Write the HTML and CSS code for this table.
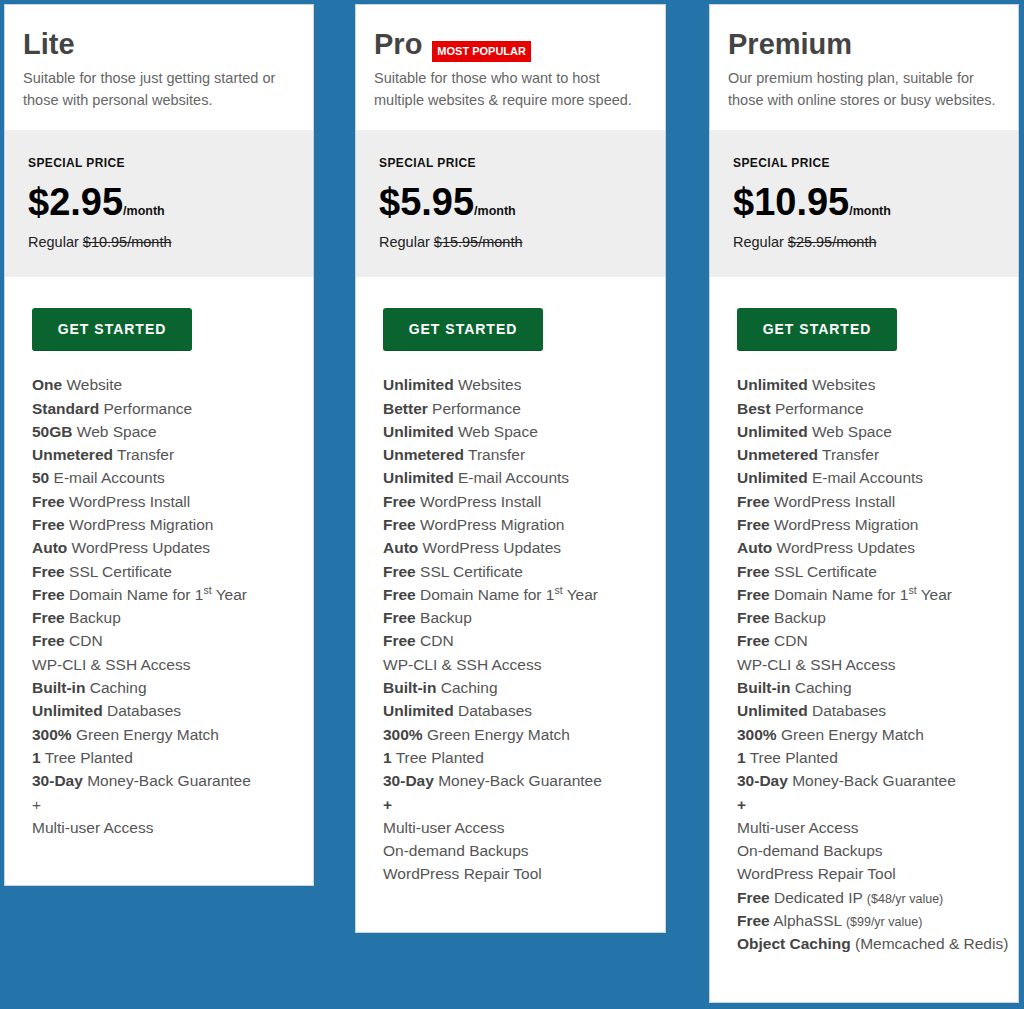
FILE: index.html
```html
<!DOCTYPE html>
<html lang="en">
<head>
<meta charset="utf-8">
<title>Hosting Plans</title>
<link rel="stylesheet" href="styles.css">
</head>
<body>
<div class="plans">
  <div class="card">
    <div class="head">
      <div class="name-row"><h2 class="name">Lite</h2></div>
      <p class="desc">Suitable for those just getting started or those with personal websites.</p>
    </div>
    <div class="price-box">
      <div class="label">SPECIAL PRICE</div>
      <div class="price"><span class="amount">$2.95</span><span class="per">/month</span></div>
      <div class="regular">Regular <s>$10.95/month</s></div>
    </div>
    <div class="body">
      <a class="btn" href="#">GET STARTED</a>
      <ul class="features">
        <li><b>One</b> Website</li>
        <li><b>Standard</b> Performance</li>
        <li><b>50GB</b> Web Space</li>
        <li><b>Unmetered</b> Transfer</li>
        <li><b>50</b> E-mail Accounts</li>
        <li><b>Free</b> WordPress Install</li>
        <li><b>Free</b> WordPress Migration</li>
        <li><b>Auto</b> WordPress Updates</li>
        <li><b>Free</b> SSL Certificate</li>
        <li><b>Free</b> Domain Name for 1<sup>st</sup> Year</li>
        <li><b>Free</b> Backup</li>
        <li><b>Free</b> CDN</li>
        <li>WP-CLI &amp; SSH Access</li>
        <li><b>Built-in</b> Caching</li>
        <li><b>Unlimited</b> Databases</li>
        <li><b>300%</b> Green Energy Match</li>
        <li><b>1</b> Tree Planted</li>
        <li><b>30-Day</b> Money-Back Guarantee</li>
        <li>+</li>
        <li>Multi-user Access</li>
      </ul>
    </div>
  </div>

  <div class="card featured">
    <div class="head">
      <div class="name-row"><h2 class="name">Pro</h2><span class="badge">MOST POPULAR</span></div>
      <p class="desc">Suitable for those who want to host multiple websites &amp; require more speed.</p>
    </div>
    <div class="price-box">
      <div class="label">SPECIAL PRICE</div>
      <div class="price"><span class="amount">$5.95</span><span class="per">/month</span></div>
      <div class="regular">Regular <s>$15.95/month</s></div>
    </div>
    <div class="body">
      <a class="btn" href="#">GET STARTED</a>
      <ul class="features">
        <li><b>Unlimited</b> Websites</li>
        <li><b>Better</b> Performance</li>
        <li><b>Unlimited</b> Web Space</li>
        <li><b>Unmetered</b> Transfer</li>
        <li><b>Unlimited</b> E-mail Accounts</li>
        <li><b>Free</b> WordPress Install</li>
        <li><b>Free</b> WordPress Migration</li>
        <li><b>Auto</b> WordPress Updates</li>
        <li><b>Free</b> SSL Certificate</li>
        <li><b>Free</b> Domain Name for 1<sup>st</sup> Year</li>
        <li><b>Free</b> Backup</li>
        <li><b>Free</b> CDN</li>
        <li>WP-CLI &amp; SSH Access</li>
        <li><b>Built-in</b> Caching</li>
        <li><b>Unlimited</b> Databases</li>
        <li><b>300%</b> Green Energy Match</li>
        <li><b>1</b> Tree Planted</li>
        <li><b>30-Day</b> Money-Back Guarantee</li>
        <li><b>+</b></li>
        <li>Multi-user Access</li>
        <li>On-demand Backups</li>
        <li>WordPress Repair Tool</li>
      </ul>
    </div>
  </div>

  <div class="card">
    <div class="head">
      <div class="name-row"><h2 class="name">Premium</h2></div>
      <p class="desc">Our premium hosting plan, suitable for those with online stores or busy websites.</p>
    </div>
    <div class="price-box">
      <div class="label">SPECIAL PRICE</div>
      <div class="price"><span class="amount">$10.95</span><span class="per">/month</span></div>
      <div class="regular">Regular <s>$25.95/month</s></div>
    </div>
    <div class="body">
      <a class="btn" href="#">GET STARTED</a>
      <ul class="features">
        <li><b>Unlimited</b> Websites</li>
        <li><b>Best</b> Performance</li>
        <li><b>Unlimited</b> Web Space</li>
        <li><b>Unmetered</b> Transfer</li>
        <li><b>Unlimited</b> E-mail Accounts</li>
        <li><b>Free</b> WordPress Install</li>
        <li><b>Free</b> WordPress Migration</li>
        <li><b>Auto</b> WordPress Updates</li>
        <li><b>Free</b> SSL Certificate</li>
        <li><b>Free</b> Domain Name for 1<sup>st</sup> Year</li>
        <li><b>Free</b> Backup</li>
        <li><b>Free</b> CDN</li>
        <li>WP-CLI &amp; SSH Access</li>
        <li><b>Built-in</b> Caching</li>
        <li><b>Unlimited</b> Databases</li>
        <li><b>300%</b> Green Energy Match</li>
        <li><b>1</b> Tree Planted</li>
        <li><b>30-Day</b> Money-Back Guarantee</li>
        <li><b>+</b></li>
        <li>Multi-user Access</li>
        <li>On-demand Backups</li>
        <li>WordPress Repair Tool</li>
        <li><b>Free</b> Dedicated IP <small>($48/yr value)</small></li>
        <li><b>Free</b> AlphaSSL <small>($99/yr value)</small></li>
        <li><b>Object Caching</b> (Memcached &amp; Redis)</li>
      </ul>
    </div>
  </div>
</div>
</body>
</html>
```

FILE: styles.css
```css
* {
  box-sizing: border-box;
}

html, body {
  margin: 0;
  padding: 0;
  background: #2574a9;
}

body {
  font-family: "Liberation Sans", Arial, sans-serif;
  min-height: 1009px;
}

.plans {
  display: flex;
  align-items: flex-start;
  gap: 41px;
  padding: 4px 0 0 4px;
}

.card {
  width: 310px;
  flex: 0 0 310px;
  background: #fff;
  border: 1px solid #c9d3dc;
}

.card.featured {
  width: 311px;
  flex: 0 0 311px;
  margin-right: 2px;
}

.head {
  padding: 22px 18px 19px 18px;
}

.name-row {
  display: flex;
  align-items: flex-end;
  margin-bottom: 5px;
}

.name {
  margin: 0;
  font-size: 29px;
  line-height: 34.8px;
  font-weight: 700;
  color: #444;
}

.badge {
  margin-left: 10px;
  background: #e60000;
  color: #fff;
  font-size: 11px;
  font-weight: 700;
  line-height: 21px;
  height: 21px;
  padding: 0 5px;
  white-space: nowrap;
}

.desc {
  margin: 0;
  font-size: 14.5px;
  line-height: 22px;
  color: #666;
}

.price-box {
  background: #eeeeee;
  padding: 26px 22px 24px 23px;
  color: #000;
}

.label {
  font-size: 12px;
  line-height: 14.4px;
  font-weight: 700;
  letter-spacing: 0.4px;
  color: #111;
}

.price {
  margin-top: 14px;
  line-height: 37px;
  height: 37px;
  white-space: nowrap;
}

.amount {
  font-size: 38px;
  font-weight: 700;
  color: #000;
}

.per {
  font-size: 12.5px;
  font-weight: 700;
  color: #111;
}

.regular {
  margin-top: 10px;
  font-size: 14.5px;
  line-height: 22px;
  color: #222;
}

.body {
  padding: 31px 20px 46px 27px;
}

.btn {
  display: block;
  width: 160px;
  height: 43px;
  line-height: 42px;
  text-align: center;
  background: #0a6430;
  border-bottom: 1px solid #07532a;
  border-radius: 3px;
  color: #fff;
  font-size: 14px;
  font-weight: 700;
  letter-spacing: 1px;
  text-decoration: none;
}

.features {
  list-style: none;
  margin: 22px 0 0 0;
  padding: 0;
  font-size: 15.5px;
  line-height: 23.3px;
  color: #555;
}

.features li {
  white-space: nowrap;
}

.features b {
  color: #444;
  font-weight: 700;
}

.features sup {
  font-size: 10.5px;
  line-height: 0;
  vertical-align: 6px;
}

.features small {
  font-size: 12.5px;
  line-height: 1;
}
```
